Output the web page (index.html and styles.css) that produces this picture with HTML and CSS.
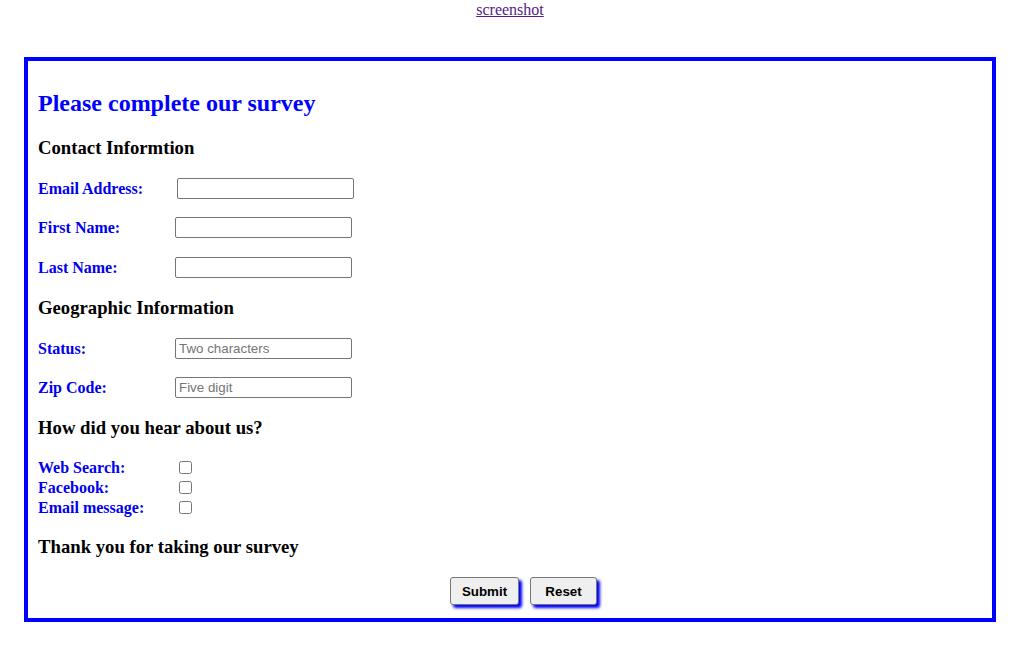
FILE: index.html
```html
<!DOCTYPE html>
<html>
<head>
<meta charset="utf-8">
<title>Survey</title>
<link rel="stylesheet" href="styles.css">
</head>
<body>
<div class="top"><a href="#" class="shot-link">screenshot</a></div>
<form class="survey">
  <h2 class="title">Please complete our survey</h2>
  <h3 class="section first-section">Contact Informtion</h3>
  <div class="row row-email"><label class="lbl lbl-wide">Email Address:</label><input class="field" type="text"></div>
  <div class="row row-first"><label class="lbl">First Name:</label><input class="field" type="text"></div>
  <div class="row row-last"><label class="lbl">Last Name:</label><input class="field" type="text"></div>
  <h3 class="section">Geographic Information</h3>
  <div class="row row-status"><label class="lbl">Status:</label><input class="field" type="text" placeholder="Two characters"></div>
  <div class="row row-zip"><label class="lbl">Zip Code:</label><input class="field" type="text" placeholder="Five digit"></div>
  <h3 class="section">How did you hear about us?</h3>
  <div class="checks">
    <div class="crow"><label class="lbl">Web Search:</label><input class="box" type="checkbox"></div>
    <div class="crow"><label class="lbl">Facebook:</label><input class="box" type="checkbox"></div>
    <div class="crow"><label class="lbl">Email message:</label><input class="box" type="checkbox"></div>
  </div>
  <h3 class="section">Thank you for taking our survey</h3>
  <div class="buttons">
    <button type="button" class="btn btn-submit">Submit</button>
    <button type="button" class="btn btn-reset">Reset</button>
  </div>
</form>
</body>
</html>
```
FILE: styles.css
```css
html, body {
  margin: 0;
  padding: 0;
  background: #ffffff;
}
body {
  font-family: "Liberation Serif", "Times New Roman", serif;
  font-size: 16px;
}
.top {
  text-align: center;
  padding-top: 1px;
  line-height: 18px;
  height: 18px;
}
.shot-link {
  color: #551a8b;
  text-decoration: underline;
}
.survey {
  margin: 38px 24px 0 24px;
  border: 4px solid #0000ff;
  padding: 0 10px 13px 10px;
  display: flex;
  flex-direction: column;
}
.title {
  margin: 28px 0 0 0;
  font-size: 24px;
  line-height: 28px;
  font-weight: bold;
  color: #0000ff;
}
.section {
  margin: 19px 0 0 0;
  font-size: 18.72px;
  line-height: 22px;
  font-weight: bold;
  color: #000000;
}
.first-section {
  margin-top: 20px;
}
.row {
  display: flex;
  align-items: center;
  height: 21px;
  margin-top: 19px;
}
.row-email { margin-top: 19px; }
.row-first { margin-top: 18px; }
.row-zip { margin-top: 18px; }
.lbl {
  display: inline-block;
  width: 137px;
  flex: none;
  font-weight: bold;
  color: #0000ee;
  line-height: 20px;
  white-space: nowrap;
}
.lbl-wide {
  width: 139px;
}
.field {
  box-sizing: border-box;
  width: 177px;
  height: 21px;
  margin: 0;
  padding: 1px 3px;
  border: 1px solid #767676;
  border-radius: 2px;
  font-family: "Liberation Sans", Arial, sans-serif;
  font-size: 13.33px;
  background: #ffffff;
}
.field::placeholder {
  color: #757575;
}
.checks {
  margin-top: 18px;
  display: flex;
  flex-direction: column;
}
.crow {
  display: flex;
  align-items: flex-start;
  height: 20px;
}
.crow .lbl {
  padding-top: 1px;
}
.box {
  width: 13px;
  height: 13px;
  margin: 4px 0 0 4px;
  flex: none;
}
.buttons {
  display: flex;
  justify-content: center;
  gap: 11px;
  padding-left: 27px;
  margin-top: 19px;
}
.btn {
  box-sizing: border-box;
  height: 28px;
  padding: 0;
  background: #efefef;
  border: 1px solid #767676;
  border-radius: 3px;
  font-family: "Liberation Sans", Arial, sans-serif;
  font-size: 13.33px;
  font-weight: bold;
  color: #000000;
  box-shadow: 3px 3px 3px #0000ff;
}
.btn-submit { width: 69px; }
.btn-reset { width: 67px; }
```
